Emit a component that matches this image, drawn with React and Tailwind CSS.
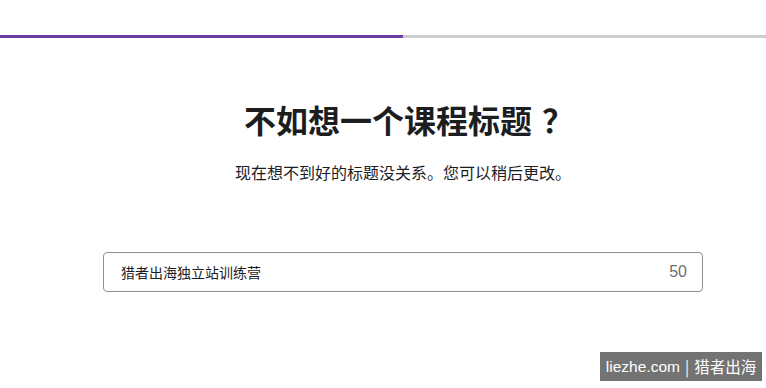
export default function App() {
  return (
    <div
      className="relative w-[766px] h-[388px] overflow-hidden bg-white text-[#1c1d1f] font-['Noto_Sans_CJK_SC','Noto_Sans',sans-serif]"
    >
      <div className="mt-[35px] flex h-[3px] w-full">
        <div className="h-full w-[403px] bg-[#6b3fa6]" />
        <div className="h-full flex-1 bg-[#cccdd1]" />
      </div>
      <div className="flex flex-col items-center pl-[40px]">
        <h1 className="mt-[62px] pl-[12px] text-[32px] leading-[38px] font-bold">
          不如想一个课程标题<span className="ml-[10px] font-semibold">？</span>
        </h1>
        <p className="mt-[23px] text-[16px] leading-[22px]">
          现在想不到好的标题没关系。您可以稍后更改。
        </p>
        <div className="mt-[69px] flex h-[40px] w-[600px] items-center justify-between rounded-[4px] border border-[#8f9397] pl-[17px] pr-[15px]">
          <span className="text-[14px]">猎者出海独立站训练营</span>
          <span className="text-[16px] text-[#6a6f73] font-['Liberation_Sans',Arial,sans-serif]">
            50
          </span>
        </div>
      </div>
      <div className="absolute left-[600px] top-[352px] flex h-[29px] w-[162px] items-center justify-center bg-[#737373] text-[15.5px] text-white">
        <span className="font-['Liberation_Sans',Arial,sans-serif]">liezhe.com</span>
        <span className="mx-[5px]">|</span>
        <span>猎者出海</span>
      </div>
    </div>
  );
}
